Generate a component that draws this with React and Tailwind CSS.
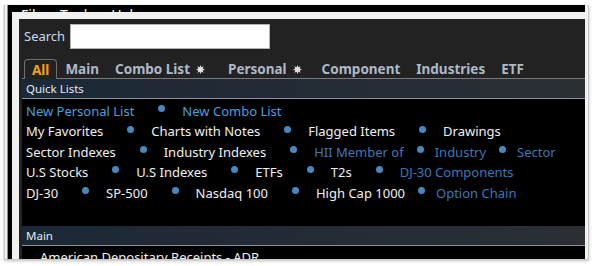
const rows = [
  [
    { t: "New Personal List", c: "light" },
    { t: "New Combo List", c: "light" },
  ],
  [
    { t: "My Favorites", c: "white" },
    { t: "Charts with Notes", c: "white" },
    { t: "Flagged Items", c: "white" },
    { t: "Drawings", c: "white" },
  ],
  [
    { t: "Sector Indexes", c: "white" },
    { t: "Industry Indexes", c: "white" },
    { t: "HII Member of", c: "dark" },
    { t: "Industry", c: "dark", tight: true },
    { t: "Sector", c: "dark", tight: true },
  ],
  [
    { t: "U.S Stocks", c: "white" },
    { t: "U.S Indexes", c: "white" },
    { t: "ETFs", c: "white" },
    { t: "T2s", c: "white" },
    { t: "DJ-30 Components", c: "dark" },
  ],
  [
    { t: "DJ-30", c: "white" },
    { t: "SP-500", c: "white" },
    { t: "Nasdaq 100", c: "white" },
    { t: "High Cap 1000", c: "white" },
    { t: "Option Chain", c: "dark", tight: true },
  ],
];

const colors = {
  white: "text-[#f1f1f1]",
  light: "text-[#4b9fdd]",
  dark: "text-[#3b78b9]",
};

function Star() {
  return (
    <svg width="9" height="9" viewBox="0 0 10 10" className="shrink-0">
      <polygon
        points="10,5 7.4,6 8.5,8.5 6,7.4 5,10 4,7.4 1.5,8.5 2.6,6 0,5 2.6,4 1.5,1.5 4,2.6 5,0 6,2.6 8.5,1.5 7.4,4"
        fill="#e2e2e2"
      />
    </svg>
  );
}

function Dot({ tight }) {
  return (
    <span
      className={`w-[7px] h-[7px] rounded-full bg-[#4a86bf] shrink-0 mb-[6px] ${
        tight ? "ml-[13px] mr-[11px]" : "ml-[24px] mr-[17px]"
      }`}
    />
  );
}

function SectionHeader({ children }) {
  return (
    <div className="h-[20px] flex items-center pl-[4px] text-[11.5px] text-[#e4ebf2] bg-gradient-to-r from-[#1b2836] to-[#2b2f34] border-b border-[#8b9096]">
      {children}
    </div>
  );
}

export default function App() {
  return (
    <div className="relative w-[592px] h-[266px] overflow-hidden bg-white pt-[5px] pl-[4px] font-['Noto_Sans',sans-serif]">
      {/* screenshot frame */}
      <div className="w-[585px] h-[255px] bg-[#f2f2f2] border-l border-r border-b border-[#c6c6c6] pl-[2px] pr-[3px] shadow-[0_1px_3px_rgba(0,0,0,0.25)]">
        {/* app window behind */}
        <div className="relative h-full bg-black border-l border-[#8c8c8c] pt-[7px] pl-[4px] flex flex-col">
          <div className="absolute top-[3px] left-[13px] flex text-[14px] leading-none text-white z-0">
            <span>Files</span>
            <span className="ml-[10px]">Tools</span>
            <span className="ml-[17px]">Help</span>
          </div>

          {/* dialog */}
          <div className="relative z-10 flex-1 border-l-[7px] border-t-[7px] border-[#f0f0f0] bg-[#222222] flex flex-col overflow-hidden">
            {/* search */}
            <div className="flex items-center gap-[5px] pl-[5px] pt-[5px]">
              <span className="text-[13px] text-[#c6dbef]">Search</span>
              <div className="w-[200px] h-[25px] bg-white border border-[#b4b4b4]" />
            </div>

            {/* tabs */}
            <div className="mt-[10px] ml-[3px] h-[20px] flex border-b border-[#7a7a7a] pl-[2px] text-[13.5px] font-bold text-[#adb9c8]">
              <div className="relative z-10 self-start h-[20px] flex items-center pt-[2px] px-[7px] border border-b-0 border-[#6e6e6e] rounded-t-[4px] bg-[#222222] text-[#f5a10e]">
                All
              </div>
              <div className="flex items-center pt-[2px] px-[8px]">Main</div>
              <div className="flex items-center pt-[2px] pl-[8px] pr-[15px]">
                Combo List
                <span className="ml-[6px]">
                  <Star />
                </span>
              </div>
              <div className="flex items-center pt-[2px] pl-[8px] pr-[12px]">
                Personal
                <span className="ml-[6px]">
                  <Star />
                </span>
              </div>
              <div className="flex items-center pt-[2px] px-[8px]">Component</div>
              <div className="flex items-center pt-[2px] px-[8px]">Industries</div>
              <div className="flex items-center pt-[2px] px-[8px]">ETF</div>
            </div>

            {/* lists */}
            <div className="ml-[3px] flex-1 flex flex-col bg-black">
              <SectionHeader>Quick Lists</SectionHeader>
              <div className="h-[127px] pt-[2.5px] pl-[4px] text-[13px]">
                {rows.map((row, i) => (
                  <div key={i} className="h-[20.4px] flex items-center whitespace-nowrap">
                    {row.map((item, j) => (
                      <div key={item.t} className="flex items-center">
                        {j > 0 && <Dot tight={item.tight} />}
                        <span className={colors[item.c]}>{item.t}</span>
                      </div>
                    ))}
                  </div>
                ))}
              </div>
              <SectionHeader>Main</SectionHeader>
              <div className="pt-[2px] pl-[18px] text-[13px] text-[#f1f1f1] whitespace-nowrap">
                American Depositary Receipts - ADR
              </div>
            </div>
          </div>
        </div>
      </div>

      {/* red highlight */}
      <div className="absolute left-[203px] top-[53px] w-[116px] h-[33px] border-[4px] border-[#e5121b] rounded-[11px]" />
    </div>
  );
}
